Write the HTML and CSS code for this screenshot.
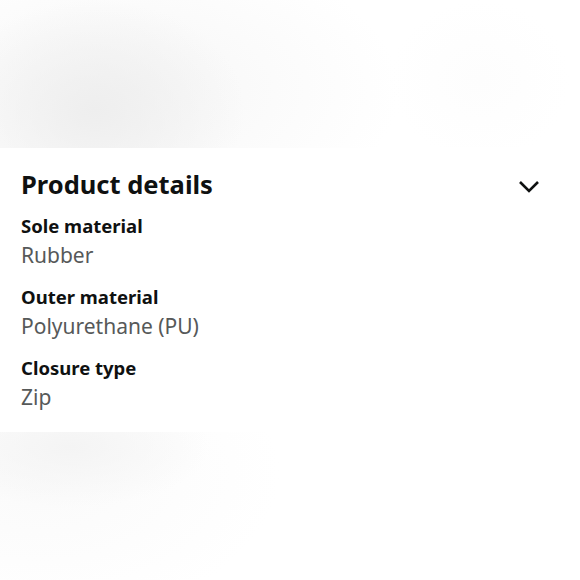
FILE: index.html
```html
<!DOCTYPE html>
<html lang="en">
<head>
    <meta charset="UTF-8">
    <meta name="viewport" content="width=device-width, initial-scale=1.0">
    <title>Product details</title>
    <link rel="stylesheet" href="styles.css">
</head>
<body>

<div class="backdrop backdrop-top"></div>

<section class="details">
    <div class="details-head">
        <h2>Product details</h2>
        <svg class="chevron" width="22" height="14" viewBox="0 0 22 14">
            <path d="M2 2 L11 11 L20 2" fill="none" stroke="#0f1111" stroke-width="2.6"/>
        </svg>
    </div>

    <div class="attr">
        <div class="attr-name">Sole material</div>
        <div class="attr-value">Rubber</div>
    </div>
    <div class="attr">
        <div class="attr-name">Outer material</div>
        <div class="attr-value">Polyurethane (PU)</div>
    </div>
    <div class="attr">
        <div class="attr-name">Closure type</div>
        <div class="attr-value">Zip</div>
    </div>
</section>

<div class="backdrop backdrop-bottom"></div>

</body>
</html>
```

FILE: styles.css
```css
body, html {
    margin: 0;
    padding: 0;
    width: 100%;
    height: 100%;
    background: white;
    font-family: "Noto Sans", Arial, sans-serif;
    color: #0f1111;
    overflow: hidden;
}

.backdrop {
    height: 148px;
}

/* blurred photo bits above and below the card */
.backdrop-top {
    background:
        radial-gradient(ellipse 150px 110px at 95px 110px, #eeeeee, rgba(240, 240, 240, 0) 100%),
        radial-gradient(ellipse 280px 150px at 120px 90px, #f6f6f6, rgba(250, 250, 250, 0) 100%),
        radial-gradient(ellipse 90px 80px at 480px 80px, #fdfdfd, rgba(255, 255, 255, 0) 100%),
        white;
}

.backdrop-bottom {
    background:
        radial-gradient(ellipse 140px 60px at 70px 15px, #f4f4f4, rgba(245, 245, 245, 0) 100%),
        radial-gradient(ellipse 240px 150px at 40px 40px, #fafafa, rgba(252, 252, 252, 0) 100%),
        white;
}

.details {
    height: 284px;
    padding: 16px 21px 0 21px;
    box-sizing: border-box;
    background: white;
}

.details-head {
    display: flex;
    justify-content: space-between;
    align-items: center;
    margin-bottom: 8px;
}

.details-head h2 {
    margin: 0;
    font-size: 25.5px;
    font-weight: 700;
    line-height: 40px;
}

.chevron {
    margin-right: 19px;
    margin-top: 6px;
}

.attr {
    margin-bottom: 12px;
}

.attr-name {
    font-size: 18.5px;
    font-weight: 700;
    line-height: 28px;
}

.attr-value {
    font-size: 21px;
    color: #565959;
    line-height: 31px;
}
```
